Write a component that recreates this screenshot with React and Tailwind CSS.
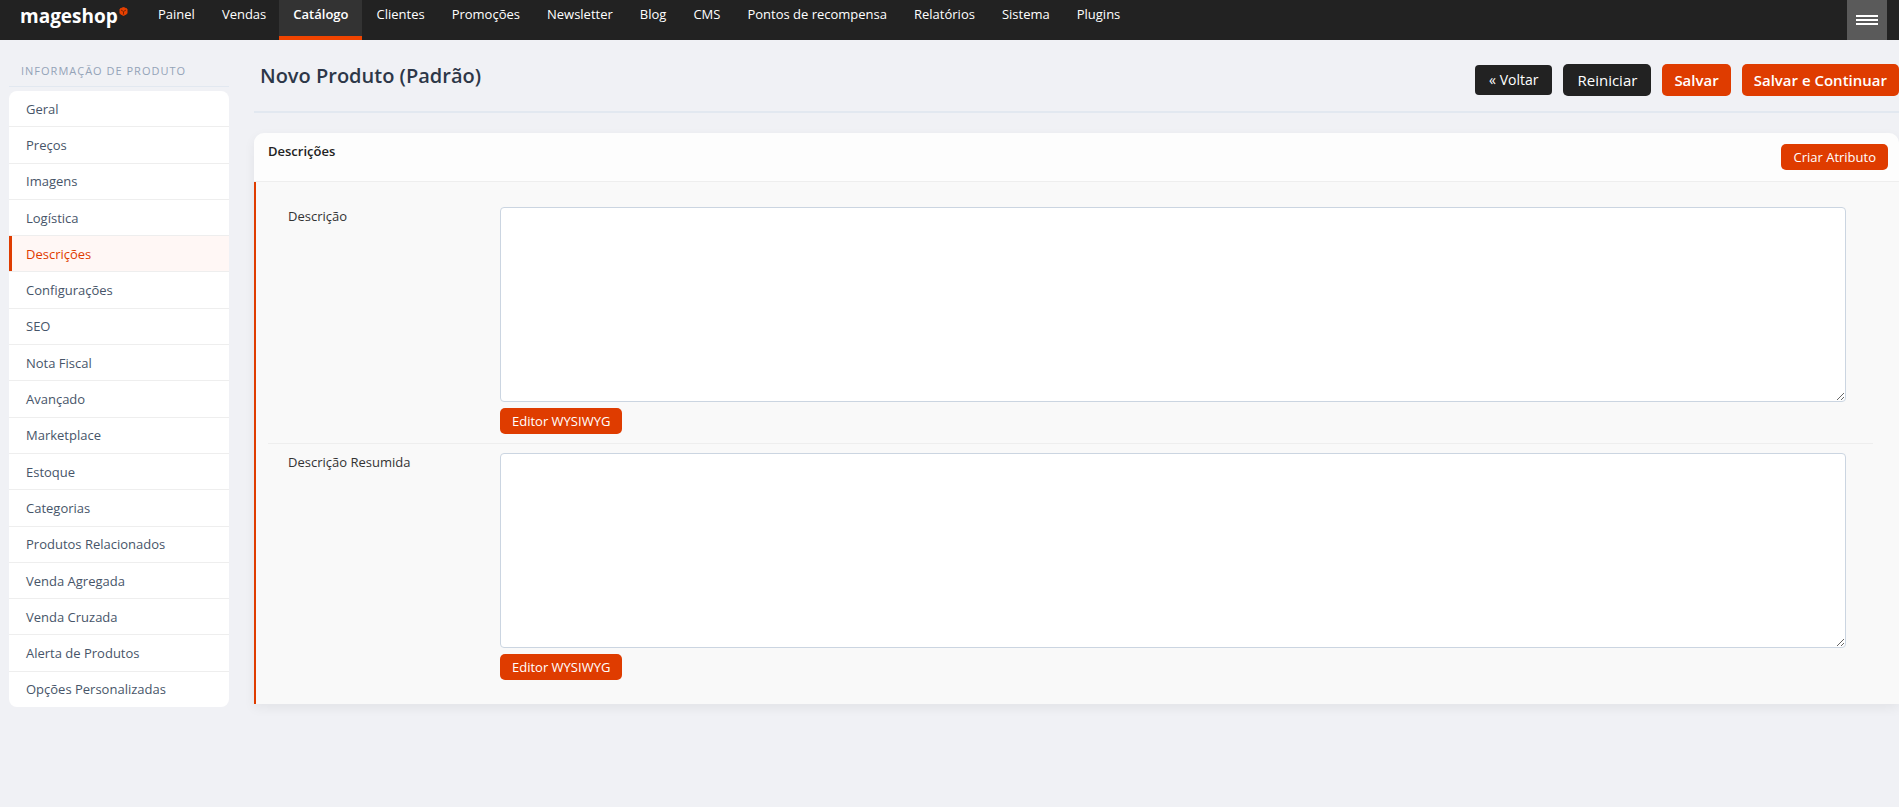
const navItems = [
  "Painel",
  "Vendas",
  "Catálogo",
  "Clientes",
  "Promoções",
  "Newsletter",
  "Blog",
  "CMS",
  "Pontos de recompensa",
  "Relatórios",
  "Sistema",
  "Plugins",
];

const sideItems = [
  "Geral",
  "Preços",
  "Imagens",
  "Logística",
  "Descrições",
  "Configurações",
  "SEO",
  "Nota Fiscal",
  "Avançado",
  "Marketplace",
  "Estoque",
  "Categorias",
  "Produtos Relacionados",
  "Venda Agregada",
  "Venda Cruzada",
  "Alerta de Produtos",
  "Opções Personalizadas",
];

const fields = [
  { id: "description", label: "Descrição" },
  { id: "short_description", label: "Descrição Resumida" },
];

function Logo() {
  return (
    <svg className="w-[108px] h-8" viewBox="0 0 108 32" role="img" aria-label="mageshop">
      <text x="0" y="23" fill="#fff" fontFamily="'Open Sans', sans-serif" fontSize="19" fontWeight="700">
        mageshop
      </text>
      <path d="M103.500 7.500l3.500 1.500v4.500l-3.500 2-3.500-2V9z" fill="#e84000" stroke="#e84000" strokeLinejoin="round" />
      <path d="M101 10l2.500 1.500 2.500-1.500M103.500 11.500v3" stroke="#7a2500" fill="none" />
    </svg>
  );
}

function Header() {
  return (
    <header className="flex h-10 bg-[#222] text-white">
      <a href="#" className="pl-5 w-36 shrink-0">
        <Logo />
      </a>
      <nav className="flex">
        {navItems.map((item) => (
          <a
            key={item}
            href="#"
            className={
              item === "Catálogo"
                ? "px-3.5 pt-1 text-[13px] leading-5 font-semibold bg-[#333] border-b-4 border-[#f04400]"
                : "pl-3.5 pr-[13px] pt-1 text-[13px] leading-5"
            }
          >
            {item}
          </a>
        ))}
      </nav>
      <button aria-label="Menu" className="ml-auto mr-3 w-10 bg-[#5a5a5a] flex flex-col items-center justify-center gap-[2px]">
        <span className="w-[22px] h-[2px] bg-white" />
        <span className="w-[22px] h-[2px] bg-white" />
        <span className="w-[22px] h-[2px] bg-white" />
      </button>
    </header>
  );
}

function Sidebar() {
  return (
    <aside className="w-[220px] shrink-0">
      <h3 className="pl-3 pt-5 pb-[5px] h-[47px] text-[11px] leading-[22px] tracking-[1px] uppercase text-[#94a3b8] border-b border-[#e2e8f0]">
        Informação de Produto
      </h3>
      <ul className="mt-1 min-h-[616px] flex flex-col bg-white rounded-lg overflow-hidden">
        {sideItems.map((item) => (
          <li key={item} className="flex-1 flex border-b border-[#eee] last:border-b-0">
            <a
              href="#"
              className={
                item === "Descrições"
                  ? "flex-1 flex items-center pl-3.5 border-l-3 border-[#df3c00] bg-[#fff7f5] text-[13px] leading-5 text-[#df3c00]"
                  : "flex-1 flex items-center pl-[17px] text-[13px] leading-5 text-[#475569]"
              }
            >
              {item}
            </a>
          </li>
        ))}
      </ul>
    </aside>
  );
}

function SmallButton({ children }) {
  return (
    <button type="button" className="h-[26px] px-3 rounded-[5px] bg-[#df3c00] text-white text-[13px] leading-5">
      {children}
    </button>
  );
}

function Field({ id, label }) {
  return (
    <div className="flex py-[9px] pl-5 pr-[27px] border-b border-[#eee] last:border-b-0">
      <label htmlFor={id} className="w-[212px] shrink-0 text-[13px] leading-[18px] text-[#333]">
        {label}
      </label>
      <div className="flex-1">
        <textarea id={id} className="block w-full h-[195px] bg-white border border-[#cbd5e1] rounded" />
        <div className="mt-1.5 flex">
          <SmallButton>Editor WYSIWYG</SmallButton>
        </div>
      </div>
    </div>
  );
}

export default function App() {
  return (
    <div className="min-h-screen bg-[#f0f1f5] font-['Open_Sans',sans-serif]">
      <Header />
      <div className="flex pl-[9px] gap-[25px]">
        <Sidebar />
        <main className="flex-1 min-w-0">
          <div className="flex justify-between h-[73px] pt-6 pl-1.5 border-b-2 border-[#e2e8f0]">
            <h1 className="text-[20px] leading-6 font-semibold text-[#2d3748]">Novo Produto (Padrão)</h1>
            <div className="flex gap-[11px] h-8 items-center text-white text-[15px] leading-5">
              <button className="h-[30px] px-3.5 rounded bg-[#222] text-sm">« Voltar</button>
              <button className="h-8 px-3.5 rounded-[5px] bg-[#222]">Reiniciar</button>
              <button className="h-8 px-3 rounded-[5px] bg-[#df3c00] font-semibold">Salvar</button>
              <button className="h-8 px-3 rounded-[5px] bg-[#df3c00] font-semibold">Salvar e Continuar</button>
            </div>
          </div>
          <section className="mt-5 rounded-t-[10px] shadow-[0_4px_12px_rgba(0,0,0,0.06)]">
            <div className="flex items-start justify-between h-[49px] pl-3.5 pr-[11px] pt-2 bg-[#fdfdfd] rounded-t-[10px] border-b border-[#eee]">
              <h2 className="text-[13px] leading-5 font-semibold text-[#222]">Descrições</h2>
              <div className="pt-[3px] flex">
                <SmallButton>Criar Atributo</SmallButton>
              </div>
            </div>
            <div className="border-l-2 border-[#df3c00] bg-[#f9f9f9] pl-3 pr-[26px] pt-4 pb-[15px]">
              {fields.map((f) => (
                <Field key={f.id} {...f} />
              ))}
            </div>
          </section>
        </main>
      </div>
    </div>
  );
}
